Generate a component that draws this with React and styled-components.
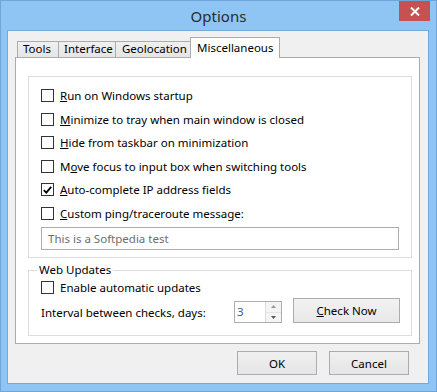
import React from "react";
import styled, { createGlobalStyle } from "styled-components";

const Global = createGlobalStyle`
  html, body { margin: 0; padding: 0; background: #8ec5f4; }
  body { font-family: "Noto Sans", "Segoe UI", sans-serif; font-size: 11.5px; color: #000; }
  * { box-sizing: border-box; }
`;

const Window = styled.div`
  width: 437px;
  height: 392px;
  background: #8ec5f4;
  border: 1px solid #6ea6d9;
  display: flex;
  flex-direction: column;
`;

const TitleBar = styled.div`
  height: 29px;
  display: grid;
  grid-template-columns: 1fr auto 1fr;
  align-items: start;
`;

const Title = styled.div`
  grid-column: 2;
  font-size: 15px;
  color: #2b2b2b;
  line-height: 28px;
  padding-top: 1px;
`;

const CloseButton = styled.div`
  grid-column: 3;
  justify-self: end;
  margin-right: 6px;
  width: 31px;
  height: 20px;
  background: #c75050;
  display: flex;
  align-items: center;
  justify-content: center;
`;

const Client = styled.div`
  margin: 0 7px 7px 6px;
  flex: 1;
  border: 1px solid #73a9db;
  background: #f0f0f0;
  padding: 6px 8px 8px 7px;
  display: flex;
  flex-direction: column;
`;

const TabStrip = styled.div`
  display: flex;
  align-items: flex-end;
  height: 20px;
  padding-left: 2px;
  position: relative;
  z-index: 1;
`;

const Tab = styled.div`
  height: ${(p) => (p.$active ? 21 : 16)}px;
  margin-bottom: ${(p) => (p.$active ? -1 : 0)}px;
  margin-left: ${(p) => (p.$first ? 0 : -1)}px;
  width: ${(p) => p.$w}px;
  border: 1px solid #acacac;
  border-bottom-width: 0;
  background: ${(p) => (p.$active ? "#fff" : "linear-gradient(#f0f0f0, #e5e5e5)")};
  padding-left: ${(p) => p.$pl}px;
  line-height: ${(p) => (p.$active ? 19 : 14)}px;
  white-space: nowrap;
  overflow: hidden;
`;

const Panel = styled.div`
  height: 287px;
  border: 1px solid #acacac;
  background: #fff;
  padding: 18px 7px 0 12px;
  display: flex;
  flex-direction: column;
`;

const GroupBox = styled.div`
  width: 384px;
  height: 182px;
  border: 1px solid #dcdcdc;
  padding: 12px 12px 0 12px;
  display: flex;
  flex-direction: column;
  gap: 10.6px;
`;

const FieldSet = styled.fieldset`
  margin: 5px 0 0 0;
  width: 384px;
  height: 73px;
  border: 1px solid #dcdcdc;
  padding: 4px 10px 0 12px;
  min-width: 0;
  display: flex;
  flex-direction: column;
`;

const Legend = styled.legend`
  padding: 0 2px;
  margin-left: -4px;
  line-height: 14px;
`;

const Row = styled.label`
  display: flex;
  align-items: center;
  gap: 6px;
  height: 13px;
  white-space: nowrap;
  line-height: 13px;
`;

const Box = styled.span`
  width: 13px;
  height: 13px;
  flex: none;
  border: 1px solid #333;
  background: #fff;
  display: flex;
  align-items: center;
  justify-content: center;
`;

const TextInput = styled.div`
  margin-top: -3.6px;
  width: 358px;
  height: 23px;
  border: 1px solid #abadb3;
  padding-left: 6px;
  line-height: 21px;
  color: #6d6d6d;
`;

const IntervalRow = styled.div`
  display: flex;
  align-items: flex-start;
  margin-top: 4px;
  height: 25px;
`;

const IntervalLabel = styled.span`
  width: 193px;
  line-height: 14px;
  padding-top: 8px;
`;

const Spin = styled.div`
  width: 48px;
  height: 22px;
  margin-top: 3px;
  border: 1px solid #abadb3;
  display: flex;
  background: #fff;
`;

const SpinValue = styled.span`
  flex: 1;
  padding-left: 2px;
  line-height: 20px;
  color: #3c5d9c;
`;

const SpinArrows = styled.div`
  width: 16px;
  border-left: 1px solid #dcdcdc;
  display: flex;
  flex-direction: column;
`;

const SpinHalf = styled.div`
  flex: 1;
  display: flex;
  align-items: center;
  justify-content: center;
  background: #f4f4f4;
  & + & { border-top: 1px solid #e4e4e4; }
`;

const Button = styled.div`
  width: ${(p) => p.$w}px;
  height: ${(p) => p.$h}px;
  border: 1px solid #acacac;
  background: linear-gradient(#f0f0f0, #e5e5e5);
  display: flex;
  align-items: center;
  justify-content: center;
  color: #000;
`;

const CheckNow = styled(Button)`
  margin-left: 11px;
  background: linear-gradient(#f2f2f2, #e8e8e8);
`;

const ButtonRow = styled.div`
  display: flex;
  justify-content: flex-end;
  gap: 12px;
  margin-top: 7px;
  padding-right: 11px;
`;

const U = styled.span`
  text-decoration: underline;
  text-underline-offset: 1px;
`;

const Check = ({ checked, children }) => (
  <Row>
    <Box>
      {checked && (
        <svg width="9" height="8" viewBox="0 0 9 8">
          <path d="M0.8 4.2 L3.3 6.6 L8.2 0.8" fill="none" stroke="#000" strokeWidth="1.8" />
        </svg>
      )}
    </Box>
    <span>{children}</span>
  </Row>
);

const tabs = [
  { t: "Tools", w: 42, pl: 5 },
  { t: "Interface", w: 58, pl: 5 },
  { t: "Geolocation", w: 76, pl: 6 },
  { t: "Miscellaneous", w: 90, pl: 6, active: true },
];

export default function App() {
  return (
    <>
      <Global />
      <Window>
        <TitleBar>
          <Title>Options</Title>
          <CloseButton>
            <svg width="10" height="9" viewBox="0 0 10 9">
              <path d="M1 0.5 L9 8.5 M9 0.5 L1 8.5" stroke="#fff" strokeWidth="2" />
            </svg>
          </CloseButton>
        </TitleBar>
        <Client>
          <TabStrip>
            {tabs.map((t, i) => (
              <Tab key={t.t} $active={t.active} $first={i === 0} $w={t.w} $pl={t.pl}>
                {t.t}
              </Tab>
            ))}
          </TabStrip>
          <Panel>
            <GroupBox>
              <Check><U>R</U>un on Windows startup</Check>
              <Check><U>M</U>inimize to tray when main window is closed</Check>
              <Check><U>H</U>ide from taskbar on minimization</Check>
              <Check>M<U>o</U>ve focus to input box when switching tools</Check>
              <Check checked><U>A</U>uto-complete IP address fields</Check>
              <Check><U>C</U>ustom ping/traceroute message:</Check>
              <TextInput>This is a Softpedia test</TextInput>
            </GroupBox>
            <FieldSet>
              <Legend>Web Updates</Legend>
              <Check>Enable automatic updates</Check>
              <IntervalRow>
                <IntervalLabel>Interval between checks, days:</IntervalLabel>
                <Spin>
                  <SpinValue>3</SpinValue>
                  <SpinArrows>
                    <SpinHalf>
                      <svg width="5" height="3" viewBox="0 0 5 3"><path d="M0 3 L2.5 0 L5 3Z" fill="#9a9a9a" /></svg>
                    </SpinHalf>
                    <SpinHalf>
                      <svg width="5" height="3" viewBox="0 0 5 3"><path d="M0 0 L2.5 3 L5 0Z" fill="#555" /></svg>
                    </SpinHalf>
                  </SpinArrows>
                </Spin>
                <CheckNow $w={107} $h={25}><U>C</U>heck Now</CheckNow>
              </IntervalRow>
            </FieldSet>
          </Panel>
          <ButtonRow>
            <Button $w={80} $h={24}>OK</Button>
            <Button $w={80} $h={24}>Cancel</Button>
          </ButtonRow>
        </Client>
      </Window>
    </>
  );
}
